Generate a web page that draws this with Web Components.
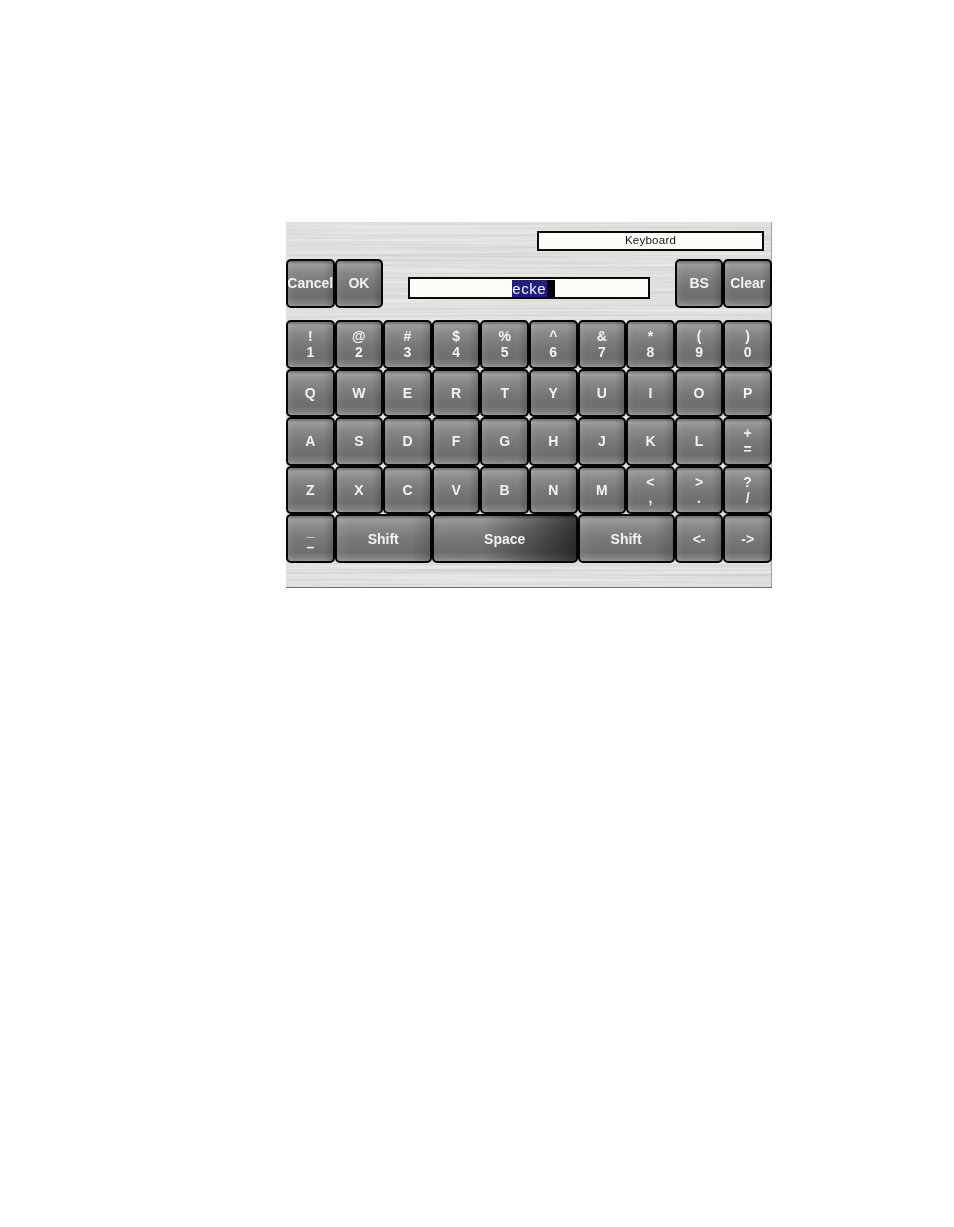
<!DOCTYPE html>
<html>
<head>
<meta charset="utf-8">
<title>Keyboard</title>
<style>
  html,body{margin:0;background:#fff}
  body{padding:222px 0 0 286px;height:1005px;overflow:hidden;font-family:"Liberation Sans",Arial,sans-serif}
</style>
</head>
<body>

<kb-panel>
  <kb-field slot="title" kind="title">Keyboard</kb-field>

  <kb-key slot="left">Cancel</kb-key>
  <kb-key slot="left">OK</kb-key>
  <kb-field slot="input" kind="input" selected="ecke"></kb-field>
  <kb-key slot="right">BS</kb-key>
  <kb-key slot="right">Clear</kb-key>

  <kb-grid slot="keys">
    <kb-key>!<br>1</kb-key><kb-key>@<br>2</kb-key><kb-key>#<br>3</kb-key><kb-key>$<br>4</kb-key><kb-key>%<br>5</kb-key>
    <kb-key>^<br>6</kb-key><kb-key>&amp;<br>7</kb-key><kb-key>*<br>8</kb-key><kb-key>(<br>9</kb-key><kb-key>)<br>0</kb-key>

    <kb-key>Q</kb-key><kb-key>W</kb-key><kb-key>E</kb-key><kb-key>R</kb-key><kb-key>T</kb-key>
    <kb-key>Y</kb-key><kb-key>U</kb-key><kb-key>I</kb-key><kb-key>O</kb-key><kb-key>P</kb-key>

    <kb-key>A</kb-key><kb-key>S</kb-key><kb-key>D</kb-key><kb-key>F</kb-key><kb-key>G</kb-key>
    <kb-key>H</kb-key><kb-key>J</kb-key><kb-key>K</kb-key><kb-key>L</kb-key><kb-key>+<br>=</kb-key>

    <kb-key>Z</kb-key><kb-key>X</kb-key><kb-key>C</kb-key><kb-key>V</kb-key><kb-key>B</kb-key>
    <kb-key>N</kb-key><kb-key>M</kb-key><kb-key>&lt;<br>,</kb-key><kb-key>&gt;<br>.</kb-key><kb-key>?<br>/</kb-key>

    <kb-key>_<br>–</kb-key><kb-key span="2">Shift</kb-key><kb-key span="3" dark>Space</kb-key><kb-key span="2">Shift</kb-key><kb-key>&lt;-</kb-key><kb-key>-&gt;</kb-key>
  </kb-grid>
</kb-panel>

<script>
// brushed metal, horizontal streaks only
const brushed = encodeURIComponent(`<svg xmlns="http://www.w3.org/2000/svg" width="486" height="366">
<filter id="b" x="0" y="0" width="100%" height="100%">
<feTurbulence type="fractalNoise" baseFrequency="0.003 0.4" numOctaves="3" seed="7"/>
<feColorMatrix values="0.3 0 0 0 0.59  0.3 0 0 0 0.59  0.3 0 0 0 0.58  0 0 0 0 1"/>
</filter>
<rect width="486" height="366" filter="url(#b)"/></svg>`)

const keyFace = `linear-gradient(180deg,#6e6e6c 0,#9c9c9a 8%,#8a8a88 22%,#767674 55%,#6e6e6c 80%,#7e7e7c 92%,#939391 100%)`

class KbPanel extends HTMLElement{
    constructor(){
        super()
        this.attachShadow({mode:'open'})
    }
    connectedCallback(){
        this.shadowRoot.innerHTML=`
        <style>
        :host{
            display:block;
            box-sizing:border-box;
            width:486px;
            height:366px;
            background:#c6c6c4 url("data:image/svg+xml,${brushed}");
            border-bottom:1px solid #6f6f6f;
            box-shadow:inset -1px 0 #a0a0a0;
            filter:blur(.3px);
        }
        .title{
            display:flex;
            justify-content:flex-end;
            padding:9px 8px 0 0;
        }
        .controls{
            display:flex;
            height:48.6px;
            margin-top:8px;
        }
        .side{
            display:flex;
            flex:none;
            width:97.2px;
        }
        .side ::slotted(kb-key){
            flex:1;
        }
        .middle{
            flex:1;
            padding:18px 25px 0;
            min-width:0;
        }
        .keys{
            margin-top:12.4px;
        }
        </style>
        <div class="title"><slot name="title"></slot></div>
        <div class="controls">
            <div class="side"><slot name="left"></slot></div>
            <div class="middle"><slot name="input"></slot></div>
            <div class="side"><slot name="right"></slot></div>
        </div>
        <div class="keys"><slot name="keys"></slot></div>
        `
    }
}

class KbGrid extends HTMLElement{
    constructor(){
        super()
        this.attachShadow({mode:'open'})
    }
    connectedCallback(){
        this.shadowRoot.innerHTML=`
        <style>
        :host{
            display:grid;
            grid-template-columns:repeat(10,48.6px);
            grid-auto-rows:48.6px;
        }
        </style>
        <slot></slot>
        `
    }
}

class KbKey extends HTMLElement{
    constructor(){
        super()
        this.attachShadow({mode:'open'})
    }
    connectedCallback(){
        this.shadowRoot.innerHTML=`
        <style>
        :host{
            display:flex;
            box-sizing:border-box;
            align-items:center;
            justify-content:center;
            text-align:center;
            border:2px solid #050505;
            border-radius:5px;
            color:#f2f2f0;
            font:bold 14px/16px "Liberation Sans",Arial,sans-serif;
            white-space:nowrap;
            overflow:hidden;
            background:
                linear-gradient(90deg,rgba(255,255,255,.07),rgba(255,255,255,0) 16%,rgba(0,0,0,0) 80%,rgba(0,0,0,.16)),
                ${keyFace};
        }
        :host([span="2"]){grid-column:span 2}
        :host([span="3"]){grid-column:span 3}
        :host([dark]){
            background:
                linear-gradient(90deg,rgba(0,0,0,0) 0,rgba(0,0,0,.02) 35%,rgba(0,0,0,.62) 100%),
                ${keyFace};
        }
        </style>
        <slot></slot>
        `
    }
}

class KbField extends HTMLElement{
    constructor(){
        super()
        this.attachShadow({mode:'open'})
    }
    connectedCallback(){
        let selected=this.getAttribute("selected")
        let inner=selected
            ? `<span class="sel">${selected}</span><span class="caret"></span>`
            : `<slot></slot>`
        this.shadowRoot.innerHTML=`
        <style>
        :host{
            display:flex;
            box-sizing:border-box;
            align-items:center;
            background:#fbfdf8;
            border:2px solid #0a0a0a;
            color:#111;
        }
        :host([kind="title"]){
            width:227px;
            height:20px;
            padding-bottom:2px;
            justify-content:center;
            font:11.5px/16px "Liberation Sans",Arial,sans-serif;
            letter-spacing:.25px;
        }
        :host([kind="input"]){
            height:22px;
            padding-left:102px;
        }
        .sel{
            display:block;
            width:35px;
            height:17px;
            background:#20207e;
            color:#f4f4f4;
            font:15px/17px "Liberation Sans",Arial,sans-serif;
            letter-spacing:.6px;
            overflow:hidden;
        }
        .caret{
            display:block;
            width:8px;
            height:17px;
            background:#000;
        }
        </style>
        ${inner}
        `
    }
}

window.customElements.define("kb-panel",KbPanel)
window.customElements.define("kb-grid",KbGrid)
window.customElements.define("kb-key",KbKey)
window.customElements.define("kb-field",KbField)
</script>
</body>
</html>
